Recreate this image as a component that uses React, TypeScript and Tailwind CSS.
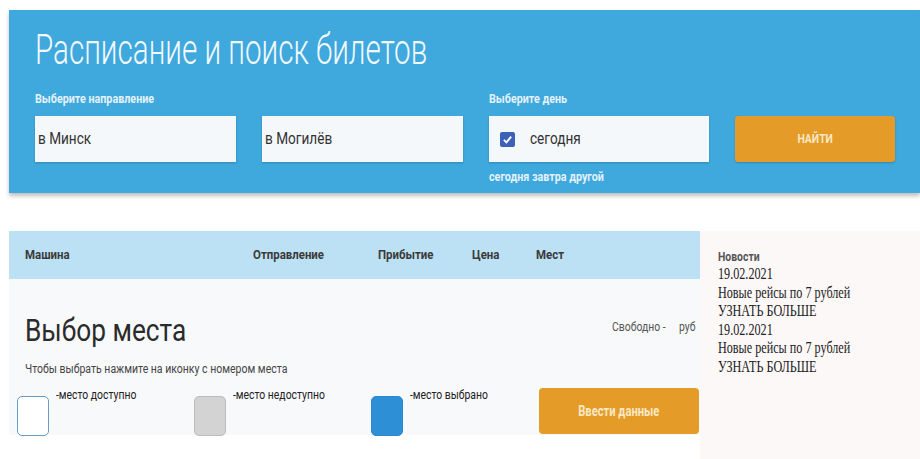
import type { ReactNode } from 'react'

function Narrow({ children, className = '' }: { children: ReactNode; className?: string }) {
  return (
    <span className={`inline-block origin-left scale-x-[0.8] whitespace-nowrap ${className}`}>
      {children}
    </span>
  )
}

function SeatLegend({ box, label }: { box: string; label: string }) {
  return (
    <div className="flex w-[177px] items-start gap-[7px]">
      <div className={`mt-[7px] h-[40px] w-[32px] shrink-0 rounded-[5px] border ${box}`} />
      <Narrow className="-mt-[1px] text-[13px] leading-[14px] text-[#222]">{label}</Narrow>
    </div>
  )
}

const news = [
  { date: '19.02.2021', title: 'Новые рейсы по 7 рублей' },
  { date: '19.02.2021', title: 'Новые рейсы по 7 рублей' },
]

export default function App() {
  return (
    <div className="h-[459px] w-[920px] overflow-hidden bg-white font-['Roboto',sans-serif]">
      {/* Search panel */}
      <div className="ml-[9px] mt-[10px] h-[183px] bg-[#3fa8dd] pl-[26px] pr-[26px] pt-[18px] shadow-[0_3px_4px_rgba(0,0,0,0.25)]">
        <h1 className="h-[44px] text-[42px] font-light leading-[44px] text-[#f3f9fd]">
          <Narrow className="scale-x-[0.705]">Расписание и поиск билетов</Narrow>
        </h1>

        <div className="mt-[20px] flex gap-[26px]">
          <div className="flex flex-col">
            <div className="flex h-[24px]">
              <Narrow className="scale-x-[0.86] text-[12.5px] font-bold leading-[14px] text-[#e3f2fb]">
                Выберите направление
              </Narrow>
            </div>
            <div className="flex gap-[26px]">
              <div className="flex h-[46px] w-[201px] items-center bg-[#f5f8fb] pl-[3px] shadow-[0_1px_2px_rgba(0,0,0,0.2)]">
                <Narrow className="text-[17px] text-[#333]">в Минск</Narrow>
              </div>
              <div className="flex h-[46px] w-[201px] items-center bg-[#f5f8fb] pl-[3px] shadow-[0_1px_2px_rgba(0,0,0,0.2)]">
                <Narrow className="text-[17px] text-[#333]">в Могилёв</Narrow>
              </div>
            </div>
          </div>

          <div className="flex flex-col">
            <div className="flex h-[24px]">
              <Narrow className="scale-x-[0.86] text-[12.5px] font-bold leading-[14px] text-[#e3f2fb]">
                Выберите день
              </Narrow>
            </div>
            <div className="flex h-[46px] w-[220px] items-center gap-[15px] bg-[#f5f8fb] pl-[11px] shadow-[0_1px_2px_rgba(0,0,0,0.2)]">
              <span className="flex h-[15px] w-[15px] items-center justify-center rounded-[2px] bg-[#3c62b8]">
                <svg viewBox="0 0 12 12" className="h-[11px] w-[11px]">
                  <path d="M2 6.5 L4.8 9.2 L10 2.8" fill="none" stroke="white" strokeWidth="2" />
                </svg>
              </span>
              <Narrow className="text-[17px] text-[#333]">сегодня</Narrow>
            </div>
            <div className="mt-[2px]">
              <Narrow className="scale-x-[0.86] text-[12.5px] font-bold leading-[14px] text-[#e3f2fb]">
                сегодня завтра другой
              </Narrow>
            </div>
          </div>

          <div className="flex flex-col pt-[24px]">
            <button className="flex h-[46px] w-[160px] items-center justify-center rounded-[3px] bg-[#e49b28] shadow-[0_1px_2px_rgba(0,0,0,0.2)]">
              <span className="inline-block scale-x-[0.8] text-[13px] font-bold text-[#fbe8c4]">НАЙТИ</span>
            </button>
          </div>
        </div>
      </div>

      {/* Trips + news */}
      <div className="ml-[9px] mt-[38px] flex h-[228px]">
        <div className="flex w-[691px] flex-col">
          <div className="flex h-[48px] items-center bg-[#bde1f4] pl-[16px] text-[13px] font-bold text-[#3a3a3a]">
            <div className="w-[228px]"><Narrow className="scale-x-[0.88]">Машина</Narrow></div>
            <div className="w-[125px]"><Narrow className="scale-x-[0.88]">Отправление</Narrow></div>
            <div className="w-[94px]"><Narrow className="scale-x-[0.88]">Прибытие</Narrow></div>
            <div className="w-[64px]"><Narrow className="scale-x-[0.88]">Цена</Narrow></div>
            <div><Narrow className="scale-x-[0.88]">Мест</Narrow></div>
          </div>

          <div className="flex h-[156px] flex-col bg-[#f8f9fa] pr-[1px]">
            <div className="mt-[33px] flex items-start justify-between pl-[16px]">
              <Narrow className="scale-x-[0.82] text-[32px] leading-[36px] text-[#2b2b2b]">Выбор места</Narrow>
              <div className="mt-[5px] flex w-[87px] text-[13px] text-[#555]">
                <div className="w-[71px]"><Narrow>Свободно -</Narrow></div>
                <Narrow>руб</Narrow>
              </div>
            </div>
            <div className="mt-[8px] pl-[16px]">
              <Narrow className="scale-x-[0.84] text-[12.5px] leading-[14px] text-[#444]">
                Чтобы выбрать нажмите на иконку с номером места
              </Narrow>
            </div>
            <div className="mt-[9px] flex items-start pl-[8px]">
              <SeatLegend box="border-[#6a9cc4] bg-white" label="-место доступно" />
              <SeatLegend box="border-[#bdbdbd] bg-[#d3d3d3]" label="-место недоступно" />
              <SeatLegend box="border-[#2b88cc] bg-[#2d8fd5]" label="-место выбрано" />
              <button className="-mt-[1px] ml-[-8px] flex h-[46px] w-[160px] items-center justify-center rounded-[4px] bg-[#e49b28]">
                <span className="inline-block scale-x-[0.8] text-[14px] font-bold text-[#fbe8c4]">Ввести данные</span>
              </button>
            </div>
          </div>
        </div>

        {/* News column */}
        <div className="flex-1 bg-[#fcf8f8] pl-[18px] pt-[19px]">
          <div className="flex h-[15px]">
            <Narrow className="text-[13px] font-bold leading-[13px] text-[#555]">Новости</Narrow>
          </div>
          <div className="font-['Liberation_Serif',serif] text-[16px] leading-[18.6px] text-[#222]">
            {news.map((item, i) => (
              <div key={i}>
                <div><Narrow className="scale-x-[0.76]">{item.date}</Narrow></div>
                <div><Narrow className="scale-x-[0.76]">{item.title}</Narrow></div>
                <div><Narrow className="scale-x-[0.76]">УЗНАТЬ БОЛЬШЕ</Narrow></div>
              </div>
            ))}
          </div>
        </div>
      </div>
    </div>
  )
}
